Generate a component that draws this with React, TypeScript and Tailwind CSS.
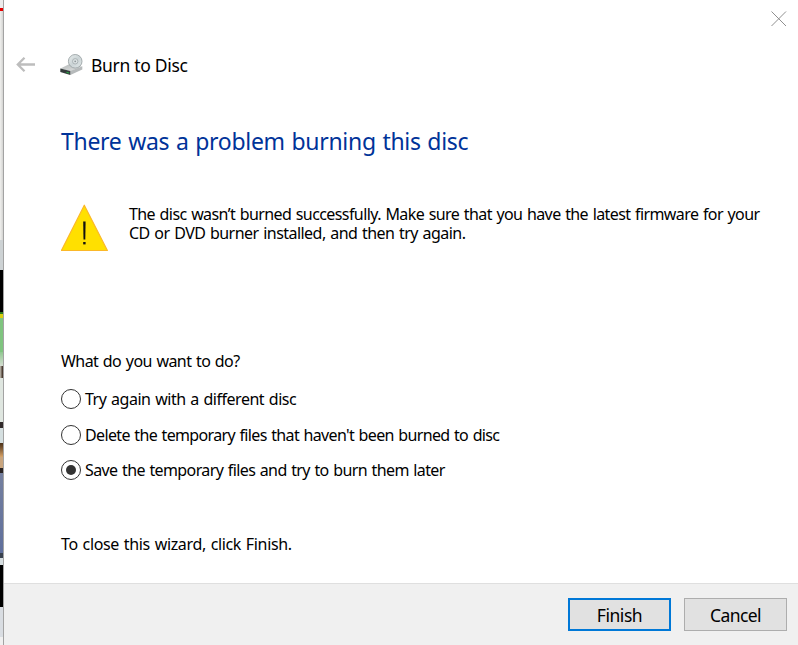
import { useState } from "react";

const OPTIONS = [
  { id: "retry", label: "Try again with a different disc", tracking: "tracking-[-0.48px]", top: "" },
  { id: "delete", label: "Delete the temporary files that haven't been burned to disc", tracking: "tracking-[-0.65px]", top: "mt-4" },
  { id: "save", label: "Save the temporary files and try to burn them later", tracking: "tracking-[-0.61px]", top: "mt-[15px]" },
];

// Slices of the window that shows behind the wizard, top to bottom
const BACKDROP = [
  "h-2 bg-[#ececec]",
  "h-[3px] bg-[#e60000]",
  "h-[229px] bg-linear-to-r from-[#f0f0ee] to-[#d4d4d2]",
  "h-[30px] bg-[#cdd2d4]",
  "h-[42px] bg-black",
  "h-[2px] bg-[#2d7a20]",
  "h-[4px] bg-[#d8d010]",
  "h-[34px] bg-[#7fc47f]",
  "h-[14px] bg-linear-to-b from-[#8fc890] to-[#d5ddd2]",
  "h-[12px] bg-linear-to-r from-[#c4c0b4] to-[#35251c]",
  "h-[44px] bg-[#dfe6e0]",
  "h-[6px] bg-[#30292a]",
  "h-[15px] bg-[#d5dfe0]",
  "h-[14px] bg-linear-to-b from-[#4a3018] to-[#d9a468]",
  "h-[11px] bg-[#c9a57e]",
  "h-[5px] bg-[#2a2424]",
  "h-[80px] bg-linear-to-b from-[#75809f] to-[#5f6f9c]",
  "h-[5px] bg-[#38414f]",
  "h-[7px] bg-[#d5dde0]",
  "h-[42px] bg-black",
  "h-[30px] bg-[#d9dde2]",
  "h-[8px] bg-[#f0f0f0]",
];

function DiscDriveIcon() {
  return (
    <svg width="24" height="24" viewBox="0 0 24 24" className="shrink-0">
      <defs>
        <linearGradient id="drive-top" x1="0" y1="0" x2="1" y2="1">
          <stop offset="0" stopColor="#b4b8b8" />
          <stop offset="1" stopColor="#e2e4e4" />
        </linearGradient>
        <linearGradient id="disc-face" x1="0" y1="0" x2="1" y2="1">
          <stop offset="0" stopColor="#e8eded" />
          <stop offset="0.5" stopColor="#cbd4d6" />
          <stop offset="1" stopColor="#e1e7e8" />
        </linearGradient>
      </defs>
      <path d="M0.5 15.5 L9 11.3 L22 13.5 L10.5 18.2 Z" fill="url(#drive-top)" />
      <path d="M10.3 18 L22.3 13.2 V16.5 L10.3 22 Z" fill="#b6babb" />
      <path d="M0.3 15.6 L10.3 18 V22 L0.3 19 Z" fill="#343b3b" />
      <path d="M6.5 18.7 L9.2 19.4 V20.6 L6.5 19.9 Z" fill="#28a745" />
      <circle cx="15.2" cy="8.3" r="6.8" fill="url(#disc-face)" stroke="#9ca4a6" strokeWidth="0.9" />
      <circle cx="15.2" cy="8.3" r="2.7" fill="#dce2e3" stroke="#a1a9ac" strokeWidth="0.8" />
      <circle cx="15.2" cy="8.3" r="0.9" fill="#8d9699" />
    </svg>
  );
}

function WarningIcon() {
  return (
    <svg width="48" height="48" viewBox="0 0 48 48" className="shrink-0">
      <path d="M23.3 1.2 L46.4 46.5 H0.4 Z" fill="#ffe000" stroke="#fbb829" strokeWidth="1.2" strokeLinejoin="round" />
      <path d="M22.2 17.5 H24.6 L24.3 35.5 H22.5 Z" fill="#111" />
      <rect x="22.2" y="38" width="2.4" height="2.4" fill="#111" />
    </svg>
  );
}

export default function App() {
  const [selected, setSelected] = useState("save");

  return (
    <div className="flex h-[645px] w-[798px] overflow-hidden bg-white font-['Noto_Sans',sans-serif] text-black">
      <div className="flex w-[3px] shrink-0 flex-col">
        {BACKDROP.map((slice) => (
          <div key={slice} className={`shrink-0 ${slice}`} />
        ))}
      </div>

      <div className="flex min-w-0 flex-1 flex-col border-l border-[#a3a3a3]">
        <div className="flex h-[38px] shrink-0 justify-end pt-[11px] pr-[11px]">
          <button aria-label="Close" className="size-4">
            <svg width="16" height="16" viewBox="0 0 16 16">
              <path d="M0.5 0.5 L15 15 M15 0.5 L0.5 15" stroke="#8f8f8f" strokeWidth="1" />
            </svg>
          </button>
        </div>

        <header className="flex h-[54px] shrink-0 items-center pl-3">
          <button aria-label="Back">
            <svg width="20" height="16" viewBox="0 0 20 16">
              <path d="M19 7.5 H2 M8.5 0.8 L1.8 7.5 L8.5 14.2" fill="none" stroke="#bdbdbd" strokeWidth="2.3" />
            </svg>
          </button>
          <div className="ml-6 flex items-center gap-[7px]">
            <DiscDriveIcon />
            <span className="text-[17.5px] leading-6 tracking-[-0.3px] whitespace-nowrap">Burn to Disc</span>
          </div>
        </header>

        <main className="flex-1 pl-[57px]">
          <h1 className="mt-[33px] h-8 text-[23px] leading-8 tracking-[-0.3px] whitespace-nowrap text-[#003399] [word-spacing:1px]">
            There was a problem burning this disc
          </h1>

          <div className="mt-[47px] flex h-12 gap-5">
            <WarningIcon />
            <p className="pt-px text-[16px] leading-[19px] whitespace-nowrap [word-spacing:1px]">
              <span className="block tracking-[-0.59px]">The disc wasn’t burned successfully. Make sure that you have the latest firmware for your</span>
              <span className="block tracking-[-0.54px]">CD or DVD burner installed, and then try again.</span>
            </p>
          </div>

          <p className="mt-[99px] h-5 text-[16px] leading-5 tracking-[-0.57px] whitespace-nowrap [word-spacing:1px]">
            What do you want to do?
          </p>

          <div role="radiogroup" className="mt-[18px]">
            {OPTIONS.map((option) => (
              <label key={option.id} className={`flex h-5 items-center gap-1 ${option.top}`}>
                <input
                  type="radio"
                  name="action"
                  className="sr-only"
                  checked={selected === option.id}
                  onChange={() => setSelected(option.id)}
                />
                <span className="flex size-5 shrink-0 items-center justify-center rounded-full border-[1.5px] border-[#333]">
                  {selected === option.id && <span className="size-2.5 rounded-full bg-[#333]" />}
                </span>
                <span className={`text-[16px] leading-5 whitespace-nowrap [word-spacing:1px] ${option.tracking}`}>
                  {option.label}
                </span>
              </label>
            ))}
          </div>

          <p className="mt-[54px] h-5 text-[16px] leading-5 tracking-[-0.35px] whitespace-nowrap [word-spacing:1px]">
            To close this wizard, click Finish.
          </p>
        </main>

        <footer className="flex h-[62px] shrink-0 justify-end gap-[13px] border-t border-[#dfdfdf] bg-[#f0f0f0] pt-[14px] pr-[11px]">
          <button className="h-[33px] w-[103px] border-2 border-[#0078d7] bg-[#e1e1e1] pt-px text-[17.5px] leading-[29px] tracking-[-0.45px]">Finish</button>
          <button className="h-[33px] w-[103px] border border-[#adadad] bg-[#e1e1e1] pt-px text-[17.5px] leading-[31px] tracking-[-0.6px]">Cancel</button>
        </footer>
      </div>
    </div>
  );
}
